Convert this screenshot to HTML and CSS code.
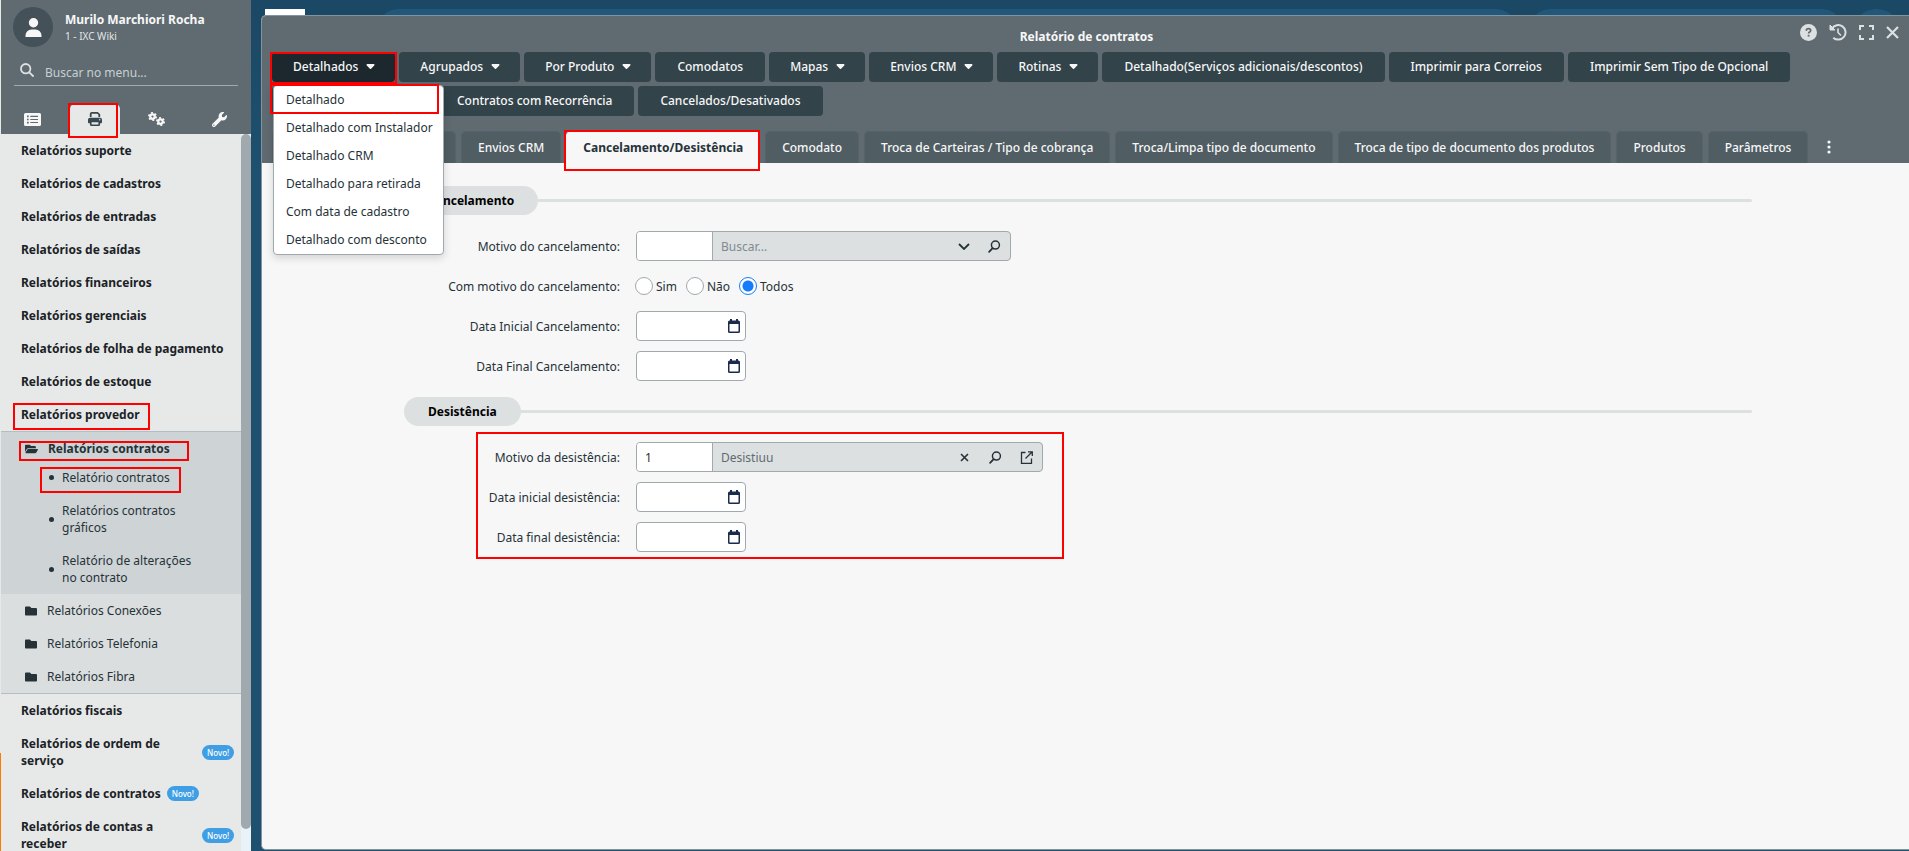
FILE: index.html
```html
<!DOCTYPE html>
<html lang="pt-BR">
<head>
<meta charset="utf-8">
<title>Relatório de contratos</title>
<link rel="stylesheet" href="styles.css">
</head>
<body>
<svg class="defs" aria-hidden="true">
  <symbol id="caret" viewBox="0 0 10 6"><path d="M1.2 0h7.6c.9 0 1.4 1 .7 1.700L5.700 5.600a1 1 0 0 1-1.400 0L.5 1.700C-.2 1 .3 0 1.200 0z" fill="currentColor"/></symbol>
  <symbol id="folder" viewBox="0 64 512 384"><path fill="currentColor" d="M464 128H272l-64-64H48C21.490 64 0 85.490 0 112v288c0 26.510 21.490 48 48 48h416c26.510 0 48-21.490 48-48V176c0-26.510-21.490-48-48-48z"/></symbol>
  <symbol id="calendar" viewBox="0 0 12 14"><path fill="currentColor" fill-rule="evenodd" d="M2 0h2v1.500h4V0h2v1.500h.5A1.500 1.500 0 0 1 12 3v9.500a1.500 1.500 0 0 1-1.500 1.500h-9A1.500 1.500 0 0 1 0 12.500V3a1.500 1.500 0 0 1 1.500-1.500H2zM1.500 5v7.500h9V5z"/></symbol>
  <symbol id="lens" viewBox="0 0 14 14"><circle cx="8" cy="5.500" r="4.300" fill="none" stroke="currentColor" stroke-width="1.600"/><path d="M5 8.700L1.200 12.700" stroke="currentColor" stroke-width="1.900" stroke-linecap="round"/></symbol>
  <symbol id="gear" viewBox="0 0 20 20"><circle cx="10" cy="10" r="5" fill="none" stroke="currentColor" stroke-width="5"/><circle cx="10" cy="10" r="8" fill="none" stroke="currentColor" stroke-width="4" stroke-dasharray="4.190 4.190"/></symbol>
</svg>
<div class="app">
  <aside class="sidebar">
    <header class="side-head">
      <div class="user">
        <span class="avatar"><svg width="17" height="19" viewBox="0 0 17 19"><circle cx="8.500" cy="4.700" r="4.700" fill="#f7f7f7"/><path d="M.5 19v-1.500a6 6 0 0 1 6-6h4a6 6 0 0 1 6 6V19z" fill="#f7f7f7"/></svg></span>
        <div><div class="user-name">Murilo Marchiori Rocha</div><div class="user-unit">1 - IXC Wiki</div></div>
      </div>
      <label class="search">
        <svg width="14" height="14" viewBox="0 0 14 14" fill="none" stroke="currentColor" stroke-width="1.800" stroke-linecap="round"><circle cx="5.700" cy="5.700" r="4.700"/><path d="M9.300 9.300L13 13"/></svg>
        <input type="text" placeholder="Buscar no menu..." aria-label="Buscar no menu">
      </label>
      <nav class="side-tabs">
        <button class="side-tab" aria-label="Cadastros"><svg width="17" height="13" viewBox="0 0 17 13"><path fill="currentColor" fill-rule="evenodd" d="M1.500 0h14A1.500 1.500 0 0 1 17 1.500v10a1.500 1.500 0 0 1-1.500 1.500h-14A1.500 1.500 0 0 1 0 11.500v-10A1.500 1.500 0 0 1 1.500 0zM3 2.600v1.600h1.700V2.600zm3.300.2v1.100h7.700V2.800zM3 5.700v1.600h1.700V5.700zm3.300.2V7h7.700V5.900zM3 8.800v1.600h1.700V8.800zm3.300.2v1.100h7.700V9z"/></svg></button>
        <button class="side-tab side-tab-on mark mark-tab" aria-label="Relatórios"><svg width="14" height="14" viewBox="0 0 14 14"><path fill="currentColor" fill-rule="evenodd" d="M1.800 5V2A2 2 0 0 1 3.800 0h6l2.400 2.200V5h-1.800V2.700L9.300 1.700H3.600V5zM2 5.700h10a2 2 0 0 1 2 2v2.600a.9.9 0 0 1-.9.9h-1v1.300a1.500 1.500 0 0 1-1.500 1.500H3.400a1.500 1.500 0 0 1-1.500-1.500v-1.300h-1a.9.9 0 0 1-.9-.9V7.700a2 2 0 0 1 2-2zm1.600 4.500v2.200h6.800v-2.200zM11.700 7a.7.7 0 1 0 0 1.400.7.7 0 0 0 0-1.400z"/></svg></button>
        <button class="side-tab" aria-label="Configurações"><svg width="18" height="14" viewBox="0 0 18 14"><use href="#gear" x="0" y="0" width="9" height="9"/><use href="#gear" x="8" y="5" width="9" height="9"/></svg></button>
        <button class="side-tab" aria-label="Ferramentas"><svg width="15" height="15" viewBox="0 0 512 512"><path fill="currentColor" d="M507.730 109.100c-2.240-9.030-13.540-12.090-20.120-5.510l-74.360 74.360-67.880-11.310-11.310-67.880 74.360-74.360c6.620-6.620 3.430-17.900-5.660-20.160-47.380-11.740-99.550.91-136.580 37.930-39.640 39.640-50.550 97.100-34.050 147.200L18.740 402.760c-24.990 24.990-24.990 65.510 0 90.500 24.990 24.990 65.510 24.990 90.500 0l213.210-213.210c50.120 16.710 107.470 5.680 147.370-34.220 37.070-37.070 49.700-89.320 37.910-136.730zM64 472c-13.250 0-24-10.750-24-24 0-13.260 10.750-24 24-24s24 10.740 24 24c0 13.250-10.750 24-24 24z"/></svg></button>
      </nav>
    </header>
    <div class="side-body">
      <nav class="menu">
        <a class="item" href="#">Relatórios suporte</a>
        <a class="item" href="#">Relatórios de cadastros</a>
        <a class="item" href="#">Relatórios de entradas</a>
        <a class="item" href="#">Relatórios de saídas</a>
        <a class="item" href="#">Relatórios financeiros</a>
        <a class="item" href="#">Relatórios gerenciais</a>
        <a class="item" href="#">Relatórios de folha de pagamento</a>
        <a class="item" href="#">Relatórios de estoque</a>
        <a class="item" href="#"><span class="mark mark-provider">Relatórios provedor</span></a>
        <div class="group">
          <div class="group-open">
            <a class="folder folder-open mark mark-folder" href="#"><svg width="13" height="10" viewBox="0 64 576 384"><path fill="currentColor" d="M572.694 292.093L500.270 416.248A63.997 63.997 0 0 1 444.989 448H45.025c-18.523 0-30.064-20.093-20.731-36.093l72.424-124.155A64 64 0 0 1 152 256h399.964c18.523 0 30.064 20.093 20.730 36.093zM152 224h328v-48c0-26.510-21.490-48-48-48H272l-64-64H48C21.490 64 0 85.490 0 112v278.046l69.077-118.418C86.214 242.250 117.989 224 152 224z"/></svg>Relatórios contratos</a>
            <a class="leaf mark mark-leaf" href="#"><span>Relatório contratos</span></a>
            <a class="leaf" href="#"><span>Relatórios contratos gráficos</span></a>
            <a class="leaf" href="#"><span>Relatório de alterações no contrato</span></a>
          </div>
          <a class="folder" href="#"><svg width="12" height="10"><use href="#folder"/></svg>Relatórios Conexões</a>
          <a class="folder" href="#"><svg width="12" height="10"><use href="#folder"/></svg>Relatórios Telefonia</a>
          <a class="folder" href="#"><svg width="12" height="10"><use href="#folder"/></svg>Relatórios Fibra</a>
        </div>
        <a class="item" href="#">Relatórios fiscais</a>
        <a class="item" href="#"><span class="wide">Relatórios de ordem de serviço</span><span class="badge">Novo!</span></a>
        <a class="item" href="#">Relatórios de contratos<span class="badge">Novo!</span></a>
        <a class="item" href="#"><span class="wide">Relatórios de contas a receber</span><span class="badge">Novo!</span></a>
      </nav>
      <div class="scroll"><div class="thumb"></div></div>
    </div>
  </aside>
  <main class="stage">
    <div class="topbar"><span class="logo"></span><span class="pill pill-main"></span><span class="pill pill-side"></span><span class="dot"></span></div>
    <section class="window">
      <header class="win-head">
        <h1 class="title">Relatório de contratos</h1>
        <div class="win-actions">
          <button aria-label="Ajuda"><svg width="17" height="17" viewBox="0 0 17 17"><circle cx="8.500" cy="8.500" r="8.500" fill="#dce0e1"/><path d="M6.300 6.700c0-1.300.9-2 2.200-2s2.200.8 2.200 1.900c0 1.400-2.100 1.500-2.100 3" fill="none" stroke="#5f6b71" stroke-width="1.700"/><rect x="7.700" y="10.800" width="1.800" height="1.800" fill="#5f6b71"/></svg></button>
          <button aria-label="Histórico"><svg width="18" height="17" viewBox="0 0 18 17" fill="none" stroke="#dce0e1" stroke-width="2"><path d="M3 4.500A7.300 7.300 0 1 1 4.300 13.700"/><path d="M1 1v5h5z" fill="#dce0e1" stroke-width="1"/><path d="M9 4.500v4l3 3" stroke-width="1.600"/></svg></button>
          <button aria-label="Maximizar"><svg width="15" height="15" viewBox="0 0 15 15" fill="none" stroke="#dce0e1" stroke-width="2"><path d="M1 5V1h4M10 1h4v4M14 10v4h-4M5 14H1v-4"/></svg></button>
          <button aria-label="Fechar"><svg width="13" height="13" viewBox="0 0 13 13" stroke="#dce0e1" stroke-width="2.200"><path d="M1 1l11 11M12 1L1 12"/></svg></button>
        </div>
        <div class="toolbar">
          <div class="drop">
            <button class="btn btn-menu btn-on mark mark-btn">Detalhados<svg width="9" height="5"><use href="#caret"/></svg></button>
            <div class="dropdown">
              <a class="mark mark-option" href="#">Detalhado</a>
              <a href="#">Detalhado com Instalador</a>
              <a href="#">Detalhado CRM</a>
              <a href="#">Detalhado para retirada</a>
              <a href="#">Com data de cadastro</a>
              <a href="#">Detalhado com desconto</a>
            </div>
          </div>
          <button class="btn btn-menu">Agrupados<svg width="9" height="5"><use href="#caret"/></svg></button>
          <button class="btn btn-menu">Por Produto<svg width="9" height="5"><use href="#caret"/></svg></button>
          <button class="btn">Comodatos</button>
          <button class="btn btn-menu">Mapas<svg width="9" height="5"><use href="#caret"/></svg></button>
          <button class="btn btn-menu">Envios CRM<svg width="9" height="5"><use href="#caret"/></svg></button>
          <button class="btn btn-menu">Rotinas<svg width="9" height="5"><use href="#caret"/></svg></button>
          <button class="btn">Detalhado(Serviços adicionais/descontos)</button>
          <button class="btn">Imprimir para Correios</button>
          <button class="btn">Imprimir Sem Tipo de Opcional</button>
          <button class="btn btn-blank" aria-label="Relatório"></button>
          <button class="btn">Contratos com Recorrência</button>
          <button class="btn">Cancelados/Desativados</button>
        </div>
        <nav class="tabs">
          <button class="tab tab-blank" aria-label="Filtros"></button>
          <button class="tab">Envios CRM</button>
          <button class="tab tab-on mark mark-active">Cancelamento/Desistência</button>
          <button class="tab">Comodato</button>
          <button class="tab">Troca de Carteiras / Tipo de cobrança</button>
          <button class="tab">Troca/Limpa tipo de documento</button>
          <button class="tab">Troca de tipo de documento dos produtos</button>
          <button class="tab">Produtos</button>
          <button class="tab">Parâmetros</button>
          <button class="more" aria-label="Mais"><svg width="4" height="14" viewBox="0 0 4 14" fill="#f7f7f7"><circle cx="2" cy="2" r="1.600"/><circle cx="2" cy="7" r="1.600"/><circle cx="2" cy="12" r="1.600"/></svg></button>
        </nav>
      </header>
      <form class="form">
        <div class="legend"><h2>Cancelamento</h2></div>
        <div class="rows">
          <div class="row"><label for="mc">Motivo do cancelamento:</label>
            <div class="combo combo-short"><input class="code" id="mc" type="text"><input class="desc" type="text" placeholder="Buscar..." aria-label="Descrição do motivo">
              <button type="button" aria-label="Abrir"><svg width="12" height="7" viewBox="0 0 12 7" fill="none" stroke="currentColor" stroke-width="1.800"><path d="M1 1l5 5 5-5"/></svg></button>
              <button type="button" aria-label="Pesquisar"><svg width="13" height="13"><use href="#lens"/></svg></button></div></div>
          <div class="row"><span class="label">Com motivo do cancelamento:</span>
            <div class="radios"><label><input type="radio" name="cm">Sim</label><label><input type="radio" name="cm">Não</label><label><input type="radio" name="cm" checked>Todos</label></div></div>
          <div class="row"><label for="d1">Data Inicial Cancelamento:</label><div class="date"><input id="d1" type="text"><svg width="12" height="14"><use href="#calendar"/></svg></div></div>
          <div class="row"><label for="d2">Data Final Cancelamento:</label><div class="date"><input id="d2" type="text"><svg width="12" height="14"><use href="#calendar"/></svg></div></div>
        </div>
        <div class="legend"><h2>Desistência</h2></div>
        <div class="rows mark mark-rows">
          <div class="row"><label for="md">Motivo da desistência:</label>
            <div class="combo"><input class="code" id="md" type="text" value="1"><input class="desc" type="text" value="Desistiuu" aria-label="Descrição da desistência">
              <button type="button" aria-label="Limpar"><svg width="9" height="9" viewBox="0 0 9 9" stroke="currentColor" stroke-width="1.600"><path d="M1 1l7 7M8 1L1 8"/></svg></button>
              <button type="button" aria-label="Pesquisar"><svg width="13" height="13"><use href="#lens"/></svg></button>
              <button type="button" aria-label="Abrir cadastro"><svg width="13" height="13" viewBox="0 0 13 13" fill="none" stroke="currentColor" stroke-width="1.300"><path d="M5.500 1.500h-4v11h10v-5M8 .8h4.300V5M12 1L5.500 7.500"/></svg></button></div></div>
          <div class="row"><label for="d3">Data inicial desistência:</label><div class="date"><input id="d3" type="text"><svg width="12" height="14"><use href="#calendar"/></svg></div></div>
          <div class="row"><label for="d4">Data final desistência:</label><div class="date"><input id="d4" type="text"><svg width="12" height="14"><use href="#calendar"/></svg></div></div>
        </div>
      </form>
    </section>
  </main>
</div>
</body>
</html>
```
FILE: styles.css
```css
* { box-sizing: border-box; }
body { margin: 0; font: 12px/17px "Noto Sans", "Open Sans", sans-serif; color: #1b2226; background: #1e506f; overflow: hidden; }
button, input { font: inherit; color: inherit; }
button { border: 0; padding: 0; background: none; cursor: pointer; }
a { color: inherit; text-decoration: none; }
h1, h2 { margin: 0; font-size: 12px; line-height: 17px; font-weight: 700; }
svg { display: block; flex: none; }
.defs { position: absolute; width: 0; height: 0; }
.app { display: flex; height: 100vh; }

/* highlight frames */
.mark { position: relative; }
.mark::after { content: ""; position: absolute; border: 2px solid #f00; pointer-events: none; z-index: 5; }
.mark-tab::after { inset: -1px 2px -4px -2px; }
.mark-provider::after { inset: -3px -10px -7px -8px; }
.mark-folder::after { inset: 9px 52px 0 18px; }
.mark-leaf::after { inset: 6px 60px 1px 39px; }
.mark-btn::after { inset: 0 -2px -2px -2px; }
.mark-option::after { inset: -2px 4px 0 -4px; }
.mark-active::after { inset: -2px -1px -8px -3px; }
.mark-rows::after { inset: -10px 688px -7px 72px; }

/* sidebar */
.sidebar { width: 251px; flex: none; display: flex; flex-direction: column; border-left: 1px solid #e7e9e9; border-image: linear-gradient(#e7e9e9 752px, #ff7a00 752px) 1; overflow: hidden; }
.side-head { background: #5f6b71; color: #f7f7f7; height: 134px; flex: none; display: flex; flex-direction: column; }
.user { display: flex; gap: 12px; padding: 7px 12px 0; }
.avatar { width: 40px; height: 40px; border-radius: 50%; background: #445158; display: grid; place-items: center; }
.user-name { font-weight: 700; padding-top: 4px; }
.user-unit { font-size: 10px; line-height: 16px; color: #e3e6e7; }
.search { display: flex; align-items: center; gap: 11px; margin: 10px 13px 0; padding: 0 0 0 6px; height: 29px; border-bottom: 1px solid #9fa9ae; color: #dce0e1; }
.search input { flex: 1; min-width: 0; border: 0; padding: 2px 0 0; outline: 0; background: none; color: #dce0e1; }
.search svg { margin-bottom: 2px; }
.search input::placeholder { color: #c8cfd2; opacity: 1; }
.side-tabs { display: flex; flex: 1; align-items: flex-end; gap: 12px; padding: 0 6px; }
.side-tab { flex: 1; height: 30px; display: grid; place-items: center; border-radius: 5px 5px 0 0; }
.side-tab-on { background: #e7e9e9; color: #39474e; }
.side-body { display: flex; flex: 1; min-height: 0; }
.menu { flex: 1; background: #e7e9e9; overflow: hidden; }
.item { display: flex; align-items: center; padding: 8px 0 8px 20px; font-weight: 700; }
.wide { width: 175px; padding-right: 30px; }
.badge { margin-left: 6px; padding: 0 5px; border-radius: 8px; background: #409fe4; color: #fff; font-size: 8px; line-height: 15px; font-weight: 500; }
.group { background: #dadede; border-top: 1px solid #b4bdc1; border-bottom: 1px solid #b4bdc1; }
.group-open { background: #ced3d6; }
.folder { display: flex; align-items: center; gap: 10px; padding: 8px 0 8px 24px; color: #263238; }
.folder-open { padding-bottom: 4px; font-weight: 700; }
.leaf { display: flex; align-items: center; gap: 8px; padding: 8px 30px 8px 48px; color: #263238; }
.leaf::before { content: ""; width: 5px; height: 5px; border-radius: 50%; background: #263238; flex: none; }
.leaf span { width: 136px; }
.scroll { width: 10px; background: #e9f2f6; padding-bottom: 22px; }
.thumb { height: 100%; border-radius: 5px; background: #9fa9ae; }

/* stage */
.stage { flex: 1; min-width: 0; position: relative; padding: 15px 0 1px 10px; display: flex; background: linear-gradient(#1b4864, #1e506f 20%); }
.topbar { position: absolute; inset: 0 0 auto 0; height: 15px; padding: 9px 8px 0 14px; background: #1b4864; display: flex; overflow: hidden; }
.logo { width: 40px; height: 30px; background: #fff; margin-right: 73px; }
.pill { height: 40px; border-radius: 20px; background: #20577b; }
.pill-main { flex: 1138; margin-right: 14px; }
.pill-side { flex: 312; margin-right: 10px; }
.dot { width: 49px; height: 49px; border-radius: 50%; background: #20577b; }
.window { flex: 1; min-width: 0; position: relative; display: flex; flex-direction: column; border: 1px solid #84949c; border-right: 0; border-radius: 5px 0 0 5px; background: #f7f7f7; }
.win-head { background: #5f6b71; border-radius: 4px 0 0 0; color: #f7f7f7; position: relative; padding: 12px 0 0 10px; }
.title { text-align: center; padding-right: 8px; }
.win-actions { position: absolute; top: 6px; right: 10px; display: flex; align-items: center; gap: 12px; height: 20px; }
.toolbar { display: flex; flex-wrap: wrap; gap: 4px; padding-right: 90px; margin-top: 7px; }
.drop { position: relative; z-index: 4; }
.btn { height: 30px; padding: 0 22px 1px; border-radius: 4px; background: #32434a; font-weight: 500; display: flex; align-items: center; gap: 8px; white-space: nowrap; }
.btn-menu { padding: 0 20px 1px 21px; }
.btn-on { background: #1c282e; }
.btn-blank { width: 159px; }
.dropdown { position: absolute; top: 33px; left: 1px; width: 171px; background: #fff; color: #263238; border: 1px solid #9fa9ae; border-radius: 4px; box-shadow: 0 3px 8px rgba(0, 0, 0, .15); }
.dropdown a { display: block; padding: 5px 0 6px 12px; white-space: nowrap; }
.tabs { display: flex; gap: 5px; margin-top: 15px; }
.tab { height: 32px; padding: 0 16px; border: 1px solid #56636a; border-bottom: 0; border-radius: 5px 5px 0 0; background: #505d63; font-weight: 500; white-space: nowrap; }
.tab-blank { width: 184px; }
.tab-on { background: #f7f7f7; border-color: #f7f7f7; color: #263238; font-weight: 700; }
.more { margin-left: 14px; }

/* form */
.form { padding: 23px 157px 0 142px; color: #000; }
.legend { display: flex; align-items: center; }
.legend h2 { padding: 6px 24px; border-radius: 15px; background: #dce0e1; }
.legend::after { content: ""; flex: 1; height: 3px; border-radius: 0 2px 2px 0; background: #dce0e1; }
.rows { display: flex; flex-direction: column; gap: 10px; padding: 16px 0; }
.rows.mark { padding: 0; margin: 16px 0; }
.row { display: grid; grid-template-columns: 216px 1fr; column-gap: 16px; align-items: center; height: 30px; }
.row > label, .label { text-align: right; color: #263238; }
.combo { display: flex; align-items: center; width: 407px; height: 30px; border: 1px solid #9fa9ae; border-radius: 4px; background: #dce0e1; color: #263238; overflow: hidden; }
.combo-short { width: 375px; }
.combo input { border: 0; height: 100%; outline: 0; padding: 0 8px; min-width: 0; }
.combo .code { width: 76px; border-right: 1px solid #9fa9ae; background: #fff; }
.combo .desc { flex: 1; background: none; color: #5f6b71; }
.combo .desc::placeholder { color: #808b90; opacity: 1; }
.combo button { width: 31px; display: grid; place-items: center; }
.date { width: 110px; height: 30px; display: flex; align-items: center; border: 1px solid #9fa9ae; border-radius: 4px; background: #fff; color: #1b2b4d; padding-right: 5px; }
.date input { flex: 1; min-width: 0; border: 0; background: none; outline: 0; }
.radios { display: flex; gap: 10px; color: #263238; }
.radios label { display: flex; align-items: center; gap: 3px; }
.radios input { appearance: none; width: 18px; height: 18px; margin: 0 0 0 -1px; border: 1px solid #9fa9ae; border-radius: 50%; background: #fff; }
.radios input:checked { border-color: #157bfb; background: radial-gradient(circle, #157bfb 5px, #fff 6px); }
```
